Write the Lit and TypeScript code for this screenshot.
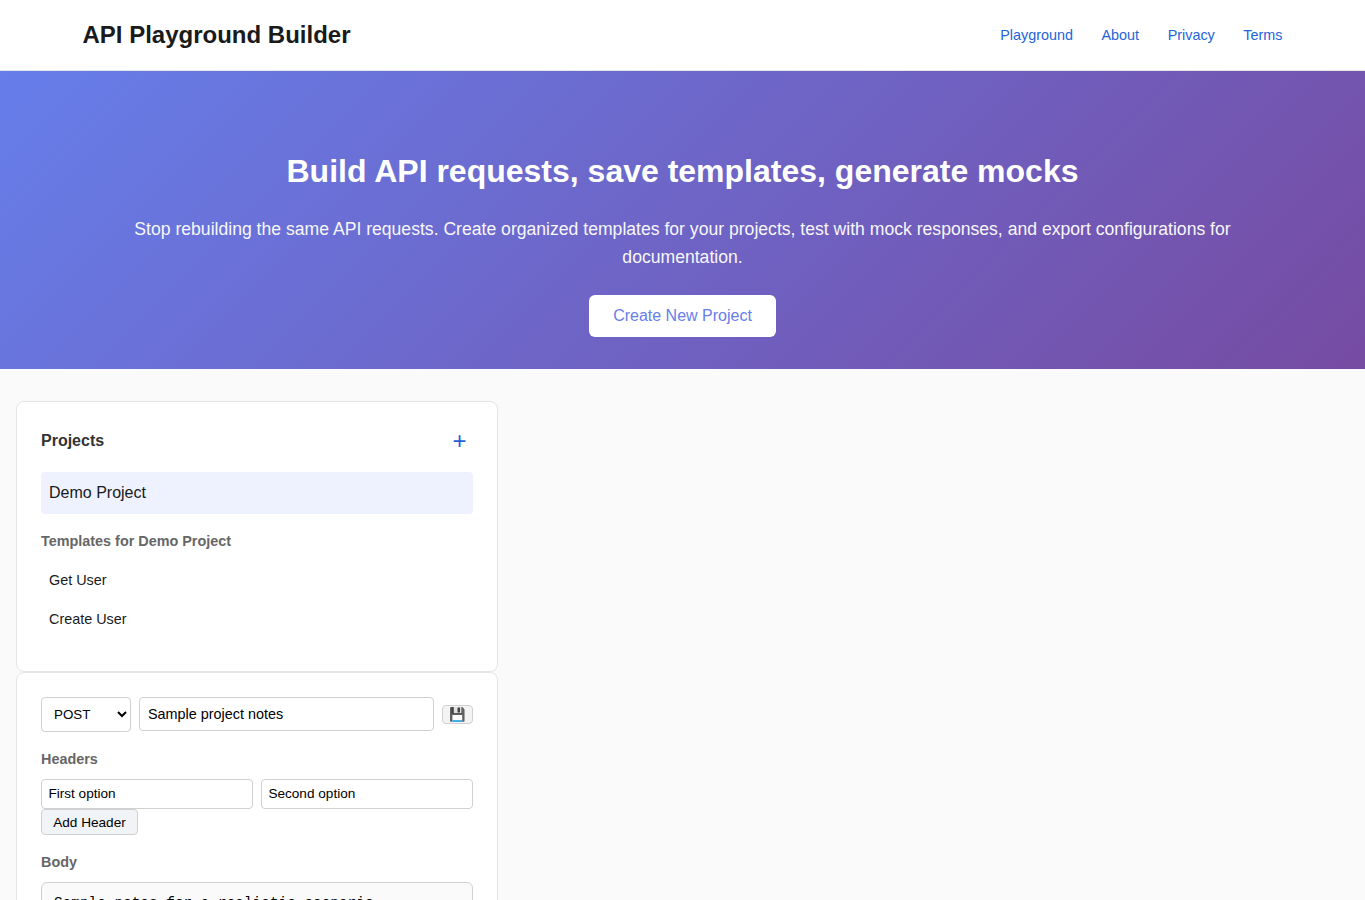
import { LitElement, html, css } from "lit";
import { customElement, state } from "lit/decorators.js";

@customElement("app-root")
export class AppRoot extends LitElement {
  @state() private templates = ["Get User", "Create User"];

  static styles = css`
    :host { display: block; height: 900px; overflow: hidden; background: #fafafa; color: #1a1a1a;
      font-family: "Liberation Sans", Arial, sans-serif; font-size: 16px; line-height: 1.6; }
    * { box-sizing: border-box; }
    h1, h2, h3, h4, p { margin: 0; }
    .header { background: #fff; border-bottom: 1px solid #e5e5e5; padding: 16px 0; height: 71px; }
    .bar { width: 1200px; margin: 0 auto; display: flex; justify-content: space-between; align-items: center; }
    .brand { font-size: 24px; line-height: 38px; font-weight: 700; }
    .nav { display: flex; gap: 28.5px; padding-top: 1px; }
    .nav a { color: #1f64d8; font-size: 14.4px; line-height: 23px; text-decoration: none; }
    .hero { background: linear-gradient(135deg, #667eea 0%, #764ba2 100%); color: #fff; text-align: center;
      height: 298px; padding: 80px 82.5px 32px; }
    .hero h2 { font-size: 32px; line-height: 40px; font-weight: 700; margin-bottom: 24px; }
    .hero p { font-size: 17.6px; line-height: 28px; opacity: .95; margin-bottom: 24px; }
    .cta { display: block; margin: 0 auto; background: #fff; color: #667eea; border: 0; border-radius: 6px;
      padding: 12px 24px; font: 16px "Liberation Sans", sans-serif; height: 42px; }
    .main { padding: 32px 16px; width: 514px; }
    .card { background: #fff; border: 1px solid #e5e5e5; border-radius: 8px; padding: 24px; }
    .projects { height: 271px; }
    .editor { height: 400px; }
    .top { display: flex; justify-content: space-between; align-items: center; height: 30px; margin-bottom: 16px; }
    .top h3 { font-size: 16px; color: #333; }
    .add { border: 0; background: none; color: #1f5fd6; font: 24px/28px "Liberation Sans", sans-serif; padding: 0 6.5px; }
    .project { background: #edf2fe; border-radius: 4px; padding: 8px; height: 42px; line-height: 25px; margin-bottom: 16px; }
    .label { font-size: 14.4px; line-height: 23px; color: #666; font-weight: 700; }
    .template { font-size: 14.4px; line-height: 23px; padding: 8px; }
    .templates { margin-top: 8px; }
    .request { display: flex; gap: 8px; align-items: center; height: 35px; margin-bottom: 16px; }
    input, select, .small, textarea { border: 1px solid #d0d0d0; border-radius: 4px; color: #000; }
    select { width: 90px; height: 35px; padding: 8px; background: #fff; font: 13.333px "Liberation Sans", sans-serif; }
    input { min-width: 0; flex: 1; background: #fff; font-family: "Liberation Sans", sans-serif; }
    .name { font-size: 14.4px; height: 34px; padding: 8px; margin-bottom: 1px; }
    .small { background: #f0f4f6; font: 13.333px "Liberation Sans", sans-serif; display: block; }
    .save { width: 31px; height: 19px; padding: 0 6px; line-height: 17px; background: #f3f3f3; }
    .pair { display: flex; gap: 8px; margin-top: 8px; }
    .pair input { height: 30px; padding: 5.4px 6.4px 7.4px; font-size: 13.6px; }
    .addh { height: 26px; width: 97px; padding: 0; font-size: 13.6px; margin-bottom: 16px; }
    textarea { display: block; width: 100%; height: 150px; margin-top: 8px; padding: 12px; background: #fafafa;
      border-radius: 6px; font: 14.4px "Liberation Mono", monospace; resize: none; }
  `;

  render() {
    return html`
      <header class="header">
        <div class="bar">
          <h1 class="brand">API Playground Builder</h1>
          <nav class="nav">
            ${["Playground", "About", "Privacy", "Terms"].map((l) => html`<a href="#">${l}</a>`)}
          </nav>
        </div>
      </header>
      <section class="hero">
        <h2>Build API requests, save templates, generate mocks</h2>
        <p>Stop rebuilding the same API requests. Create organized templates for your projects, test with mock responses, and export configurations for documentation.</p>
        <button class="cta">Create New Project</button>
      </section>
      <main class="main">
        <section class="card projects">
          <div class="top"><h3>Projects</h3><button class="add">+</button></div>
          <div class="project">Demo Project</div>
          <h4 class="label">Templates for Demo Project</h4>
          <div class="templates">${this.templates.map((t) => html`<div class="template">${t}</div>`)}</div>
        </section>
        <section class="card editor">
          <div class="request">
            <select><option>GET</option><option selected>POST</option><option>PUT</option><option>DELETE</option></select>
            <input class="name" .value=${"Sample project notes"} />
            <button class="small save">💾</button>
          </div>
          <h4 class="label">Headers</h4>
          <div class="pair">
            <input .value=${"First option"} /><input .value=${"Second option"} />
          </div>
          <button class="small addh">Add Header</button>
          <h4 class="label">Body</h4>
          <textarea .value=${"Sample notes for a realistic scenario."}></textarea>
        </section>
      </main>
    `;
  }
}
